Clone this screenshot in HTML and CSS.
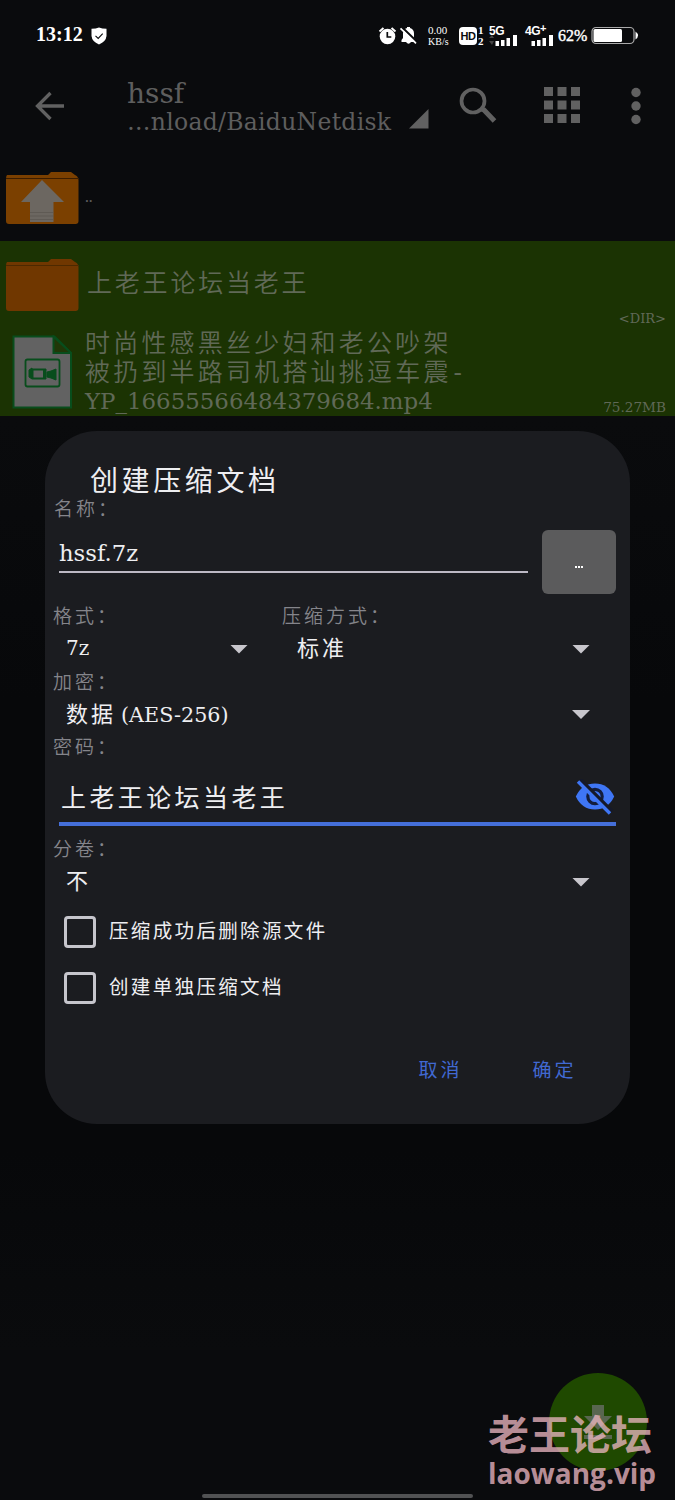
FILE: index.html
```html
<!DOCTYPE html>
<html lang="zh-CN">
<head>
<meta charset="utf-8">
<title>hssf</title>
<link rel="stylesheet" href="styles.css">
</head>
<body>
<div class="screen">
  <header class="status">
    <span class="clock">13:12</span>
    <svg class="shield" width="16" height="18" viewBox="0 0 16 18"><path d="M8 .5Q11 1.8 15.5 1.8V9Q15 14.5 8 17.5 1 14.5.5 9V1.8Q5 1.8 8 .5z" fill="#fff"/><path d="M4.500 8.800l2.700 2.700 4.500-4.800" fill="none" stroke="#0a0b0d" stroke-width="1.100"/></svg>
    <svg class="sys" width="40" height="20" viewBox="0 0 40 20"><circle cx="9.500" cy="10.500" r="7.800" fill="#fff"/><path d="M1.500 5.500l4-3.500M17.500 5.500l-4-3.500" stroke="#fff" stroke-width="2"/><path d="M9.300 6v5h4" fill="none" stroke="#0a0b0d" stroke-width="1.700"/><path d="M23.500 16v-2l1.500-2V7.500q0-4.500 4-5.500V1h3v1q4 1 4 5.500V12l1.500 2v2z" fill="#fff"/><path d="M28 16h5q-2.500 3.500-5 0z" fill="#fff"/><path d="M23.500 .8l16 15.500" stroke="#0a0b0d" stroke-width="2.200"/><path d="M22.500 2.300l15.500 15" stroke="#fff" stroke-width="1.700"/></svg>
    <span class="speed"><span>0.00</span><span>KB/s</span></span>
    <span class="hd">HD</span>
    <span class="sims"><span>1</span><span>2</span></span>
    <span class="net"><b>5G</b><svg width="29" height="11" viewBox="0 0 29 11"><path d="M6.500 6h3.500v5H6.500zM12 5h3.500v6H12zM17.500 3H21v8h-3.500zM24 0h4v11h-4z" fill="#fff"/><path d="M0 3l3-3 2 3zM0 6h5l-2 4z" fill="#444"/></svg></span>
    <span class="net net-b"><b>4G<sup>+</sup></b><svg width="29" height="11" viewBox="0 0 29 11"><path d="M6.500 6h3.500v5H6.500zM12 5h3.500v6H12zM17.500 3H21v8h-3.500zM24 0h4v11h-4z" fill="#fff"/></svg></span>
    <span class="pct">62%</span>
    <svg class="battery" width="49" height="19" viewBox="0 0 49 19"><rect x="1" y="1.500" width="42" height="16" rx="4" fill="none" stroke="#aaa" stroke-width="1.200"/><rect x="2.500" y="3" width="28.500" height="13" rx="1.500" fill="#fff"/><path d="M44.500 5.500q5 4 0 8z" fill="#fff"/></svg>
  </header>

  <nav class="toolbar">
    <svg class="back" width="30" height="30" viewBox="0 0 30 30"><path d="M29 15H3M15.500 2L2.500 15l13 13" fill="none" stroke="#616161" stroke-width="3.300"/></svg>
    <div class="path"><span class="dirname">hssf</span><span class="parent">…nload/BaiduNetdisk</span></div>
    <svg class="corner" width="20" height="20" viewBox="0 0 20 20"><path d="M19.500 0v19.500H0z" fill="#616161"/></svg>
    <svg class="search" width="38" height="38" viewBox="0 0 38 38"><circle cx="14" cy="14" r="11.500" fill="none" stroke="#616161" stroke-width="3.700"/><path d="M22 22l3 1 10.500 11" fill="none" stroke="#616161" stroke-width="5"/></svg>
    <svg class="tiles" width="36" height="36" viewBox="0 0 36 36"><path d="M0 0h9v9H0zM13.500 0h9v9h-9zM27 0h9v9h-9zM0 13.500h9v9H0zM13.500 13.500h9v9h-9zM27 13.500h9v9h-9zM0 27h9v9H0zM13.500 27h9v9h-9zM27 27h9v9h-9z" fill="#616161"/></svg>
    <svg class="more" width="10" height="38" viewBox="0 0 10 38"><g fill="#616161"><circle cx="5" cy="5.500" r="4.700"/><circle cx="5" cy="19" r="4.700"/><circle cx="5" cy="32.500" r="4.700"/></g></svg>
  </nav>

  <main class="files">
    <div class="file">
      <svg class="thumb" width="75" height="54" viewBox="0 0 75 54"><path d="M2 4h41l3-3h20l4 3q3 1 3.500 5V50q0 3-3 3H4q-3 0-3-3V8q0-3 1-4z" fill="#7b4000"/><path d="M1 7.500h73" stroke="#3b1d00"/><path d="M37 9l22 22H48.500v20H25V31H16z" fill="#6c6761"/><path d="M25 41.500h23.500M25 45h23.500M25 48.500h23.500" stroke="#5a554f" stroke-width=".7"/></svg>
      <span class="name dots">..</span>
    </div>
    <div class="file selected">
      <svg class="thumb" width="75" height="54" viewBox="0 0 75 54"><path d="M2 4h41l3-3h20l4 3q3 1 3.500 5V50q0 3-3 3H4q-3 0-3-3V8q0-3 1-4z" fill="#703700"/><path d="M1 7.500h73" stroke="#4d2900"/></svg>
      <span class="name folder">上老王论坛当老王</span>
      <span class="meta">&lt;DIR&gt;</span>
    </div>
    <div class="file selected video">
      <svg class="thumb" width="60" height="74" viewBox="0 0 60 74"><path d="M1.500 1.500h41L59 18v54.500H1.500z" fill="#626262" stroke="#084d1c" stroke-width="2"/><path d="M41.500 1.500V18H59z" fill="#203708" stroke="#084d1c" stroke-width="2"/><rect x="13.500" y="24.500" width="34" height="27" rx="2" fill="none" stroke="#084d1c" stroke-width="1.800"/><path d="M17 35l3-2v11l-3-2zM20 34h14v10H20zM35 37l4-1 5-2v11l-5-2-4-1z" fill="#084d1c" stroke="#084d1c"/><rect x="21" y="35" width="10.500" height="8" fill="#626262" stroke="#084d1c"/></svg>
      <span class="name"><span class="zh">时尚性感黑丝少妇和老公吵架</span><span class="zh">被扔到半路司机搭讪挑逗车震<span class="dash">-</span></span><span class="latin">YP_16655566484379684.mp4</span></span>
      <span class="meta size">75.27MB</span>
    </div>
  </main>

  <div class="fab"><svg width="30" height="36" viewBox="0 0 30 36"><path d="M9 0h12v11h8L15 25 1 11h8zM1 30h28v4H1z" fill="#596650"/></svg></div>

  <section class="dialog">
    <h1 class="title">创建压缩文档</h1>
    <div class="label label-name">名称：</div>
    <div class="name-row"><div class="input">hssf.7z</div><div class="browse"><i></i><i></i><i></i></div></div>
    <div class="pair">
      <div class="col-a"><div class="label">格式：</div><div class="value"><span class="lat">7z</span><i class="caret"></i></div></div>
      <div class="col-b"><div class="label">压缩方式：</div><div class="value"><span class="cjk">标准</span><i class="caret"></i></div></div>
    </div>
    <div class="label">加密：</div>
    <div class="value"><span class="cjk">数据<span class="lat aes">(AES-256)</span></span><i class="caret"></i></div>
    <div class="label">密码：</div>
    <div class="password">
      <span>上老王论坛当老王</span>
      <svg class="eye" width="40" height="36" viewBox="0 0 40 36"><path d="M.8 17.500Q7 4.500 20 4.500T39.200 17.500Q33 30.500 20 30.500T.8 17.500z" fill="#3f76f5"/><circle cx="20" cy="17.500" r="7.200" fill="#3f76f5" stroke="#131d3c" stroke-width="3.200"/><path d="M5 .5l32 32" stroke="#15192a" stroke-width="4"/><path d="M3 2.500l32 32" stroke="#3f76f5" stroke-width="3.400"/></svg>
    </div>
    <div class="label">分卷：</div>
    <div class="value"><span class="cjk">不</span><i class="caret"></i></div>
    <div class="check"><i class="box"></i><span>压缩成功后删除源文件</span></div>
    <div class="check"><i class="box"></i><span>创建单独压缩文档</span></div>
    <div class="actions"><span>取消</span><span>确定</span></div>
  </section>

  <div class="handle"></div>
  <div class="watermark"><span class="wm-zh">老王论坛</span><span class="wm-en">laowang.vip</span></div>
</div>
</body>
</html>
```
FILE: styles.css
```css
* { box-sizing: border-box; }
body { margin: 0; background: #0a0b0d; }
.screen {
  position: relative; width: 675px; height: 1500px; overflow: hidden;
  background: linear-gradient(#0a0b0d 0, #0a0b0d 420px, #07080a 700px, #07080a 1150px, #0a0b0d 1350px);
  color: #5e5e5e; font-family: "DejaVu Serif", "Noto Sans CJK SC", serif; white-space: nowrap;
}
svg { display: block; flex: none; }
span { flex: none; }

.status { display: flex; align-items: center; height: 72px; padding-left: 36px; color: #fff; font-family: "Liberation Serif", serif; }
.clock { width: 46px; font-size: 20px; font-weight: bold; line-height: 24px; margin-top: -4px; }
.shield { margin-left: 9px; }
.sys { margin-left: 271px; }
.speed { display: flex; flex-direction: column; width: 22px; margin-left: 10px; font-size: 11px; line-height: 11.500px; }
.speed span:last-child { font-size: 10px; }
.hd { width: 18px; height: 18px; margin-left: 9px; border-radius: 4px; background: #fff; color: #0a0b0d; font: bold 11px/18px "Liberation Sans", sans-serif; text-align: center; letter-spacing: -.5px; }
.sims { display: flex; flex-direction: column; width: 7px; margin-left: 1px; font-size: 11px; font-weight: bold; line-height: 11px; }
.net { display: flex; flex-direction: column; width: 29px; height: 20px; margin-left: 4px; font: bold 12px/10px "Liberation Sans", sans-serif; letter-spacing: -.5px; }
.net svg { margin-top: -1px; }
.net-b { margin-left: 7px; }
.net sup { font-size: 11px; line-height: 0; vertical-align: 3px; }
.pct { width: 29px; margin-left: 4px; font-size: 16px; -webkit-text-stroke: .4px #fff; }
.battery { margin: -1px 0 0 4px; }

.toolbar { display: flex; height: 82px; padding-left: 35px; }
.back { margin-top: 19px; }
.path { display: flex; flex-direction: column; width: 264px; margin-left: 62px; padding-top: 7px; }
.dirname { font-size: 28px; line-height: 30px; }
.parent { font-size: 23.500px; line-height: 26px; letter-spacing: .28px; }
.corner { margin: 37px 0 0 18px; }
.search { margin: 15px 0 0 30px; }
.tiles { margin: 15px 0 0 47px; }
.more { margin: 15px 0 0 51px; }

.file { display: flex; height: 87px; padding-left: 5px; }
.file > .thumb { margin-top: 17px; }
.name { font-size: 25px; margin-left: 7px; }
.dots { font-size: 11px; line-height: 20px; margin: 35px 0 0 5px; font-weight: bold; }
.folder { font-weight: 350; letter-spacing: 2.800px; line-height: 30px; padding-top: 28px; }
.selected { background: #1b3303; color: #606957; }
.meta { margin: 69px 9px 0 auto; font-size: 13px; line-height: 18px; }
.video { height: 88px; padding-left: 12px; }
.video > .thumb { margin-top: 7px; }
.video .name { display: flex; flex-direction: column; margin-left: 13px; padding-top: 1px; }
.zh { line-height: 29px; font-weight: 350; letter-spacing: 3.200px; }
.dash { margin-left: 2px; }
.latin { font-size: 22.900px; line-height: 29px; }
.size { font-size: 13.600px; margin-top: 70px; }

.dialog {
  position: absolute; left: 45px; top: 431px; width: 585px; height: 693px;
  display: flex; flex-direction: column; padding: 34px 14px 0 8px;
  border-radius: 52px; background: #1b1c20; color: #eeeef1;
}
.title { margin: 0 0 0 37px; font-size: 28px; font-weight: 400; line-height: 34px; letter-spacing: 3.600px; }
.label { height: 22px; color: #85858b; font-size: 19px; font-weight: 350; line-height: 22px; letter-spacing: 3px; }
.label-name { height: 20px; padding-left: 1px; line-height: 20px; }
.name-row { display: flex; height: 86px; padding: 11px 0 0 6px; }
.input { width: 469px; height: 43px; border-bottom: 2px solid #bdb9c5; font-size: 22.700px; line-height: 46px; }
.browse { display: flex; width: 74px; height: 64px; margin-left: 14px; padding: 36px 0 0 32.500px; gap: 1px; border-radius: 6px; background: #5b5b5c; }
.browse i { width: 2px; height: 2px; background: #fff; }
.pair { display: flex; }
.col-a { width: 229px; }
.col-b { flex: 1; }
.col-a .value { padding-right: 34px; }
.col-b .value { padding-left: 15px; }
.value { display: flex; align-items: center; justify-content: space-between; height: 44px; padding: 0 26px 0 13px; font-size: 22px; letter-spacing: 3px; }
.pair + .label + .value { height: 43px; }
.cjk { padding-bottom: 6px; }
.lat { font-size: 20px; letter-spacing: 0; }
.value > .lat { padding-bottom: 2px; }
.aes { font-size: 20.700px; margin-left: 5px; }
.caret { width: 18px; height: 9px; background: #c8c6cc; clip-path: polygon(0 0, 100% 0, 50% 100%); }
.password { display: flex; align-items: center; justify-content: space-between; height: 68px; margin: 0 0 12px 6px; padding: 12px 1px 0 2px; border-bottom: 4px solid #456fd9; font-size: 25px; letter-spacing: 3.400px; }
.eye { margin-top: 2px; }
.check { display: flex; align-items: center; height: 56px; padding-left: 11px; font-size: 19.500px; letter-spacing: 2.350px; }
.check span { padding-bottom: 5px; }
.box { width: 32px; height: 32px; margin: -1px 13px 0 0; border: 3px solid #c6c5cc; border-radius: 4px; }
.actions { display: flex; justify-content: flex-end; gap: 70px; margin-top: 39px; padding-right: 39.500px; color: #4169d2; font-size: 19px; line-height: 30px; letter-spacing: 3px; }

.fab { position: absolute; left: 549px; top: 1373px; display: flex; justify-content: center; width: 98px; height: 98px; padding-top: 32px; border-radius: 50%; background: #1f4900; }
.handle { position: absolute; left: 202px; top: 1494px; width: 271px; height: 4px; border-radius: 2px; background: #515253; }
.watermark { position: absolute; left: 488px; top: 1411px; display: flex; flex-direction: column; gap: 3px; color: rgba(240, 185, 196, .77); }
.wm-zh { font: bold 41px/42px "Noto Sans CJK SC", sans-serif; }
.wm-en { font: bold 28px/34px "Open Sans", sans-serif; }
```
